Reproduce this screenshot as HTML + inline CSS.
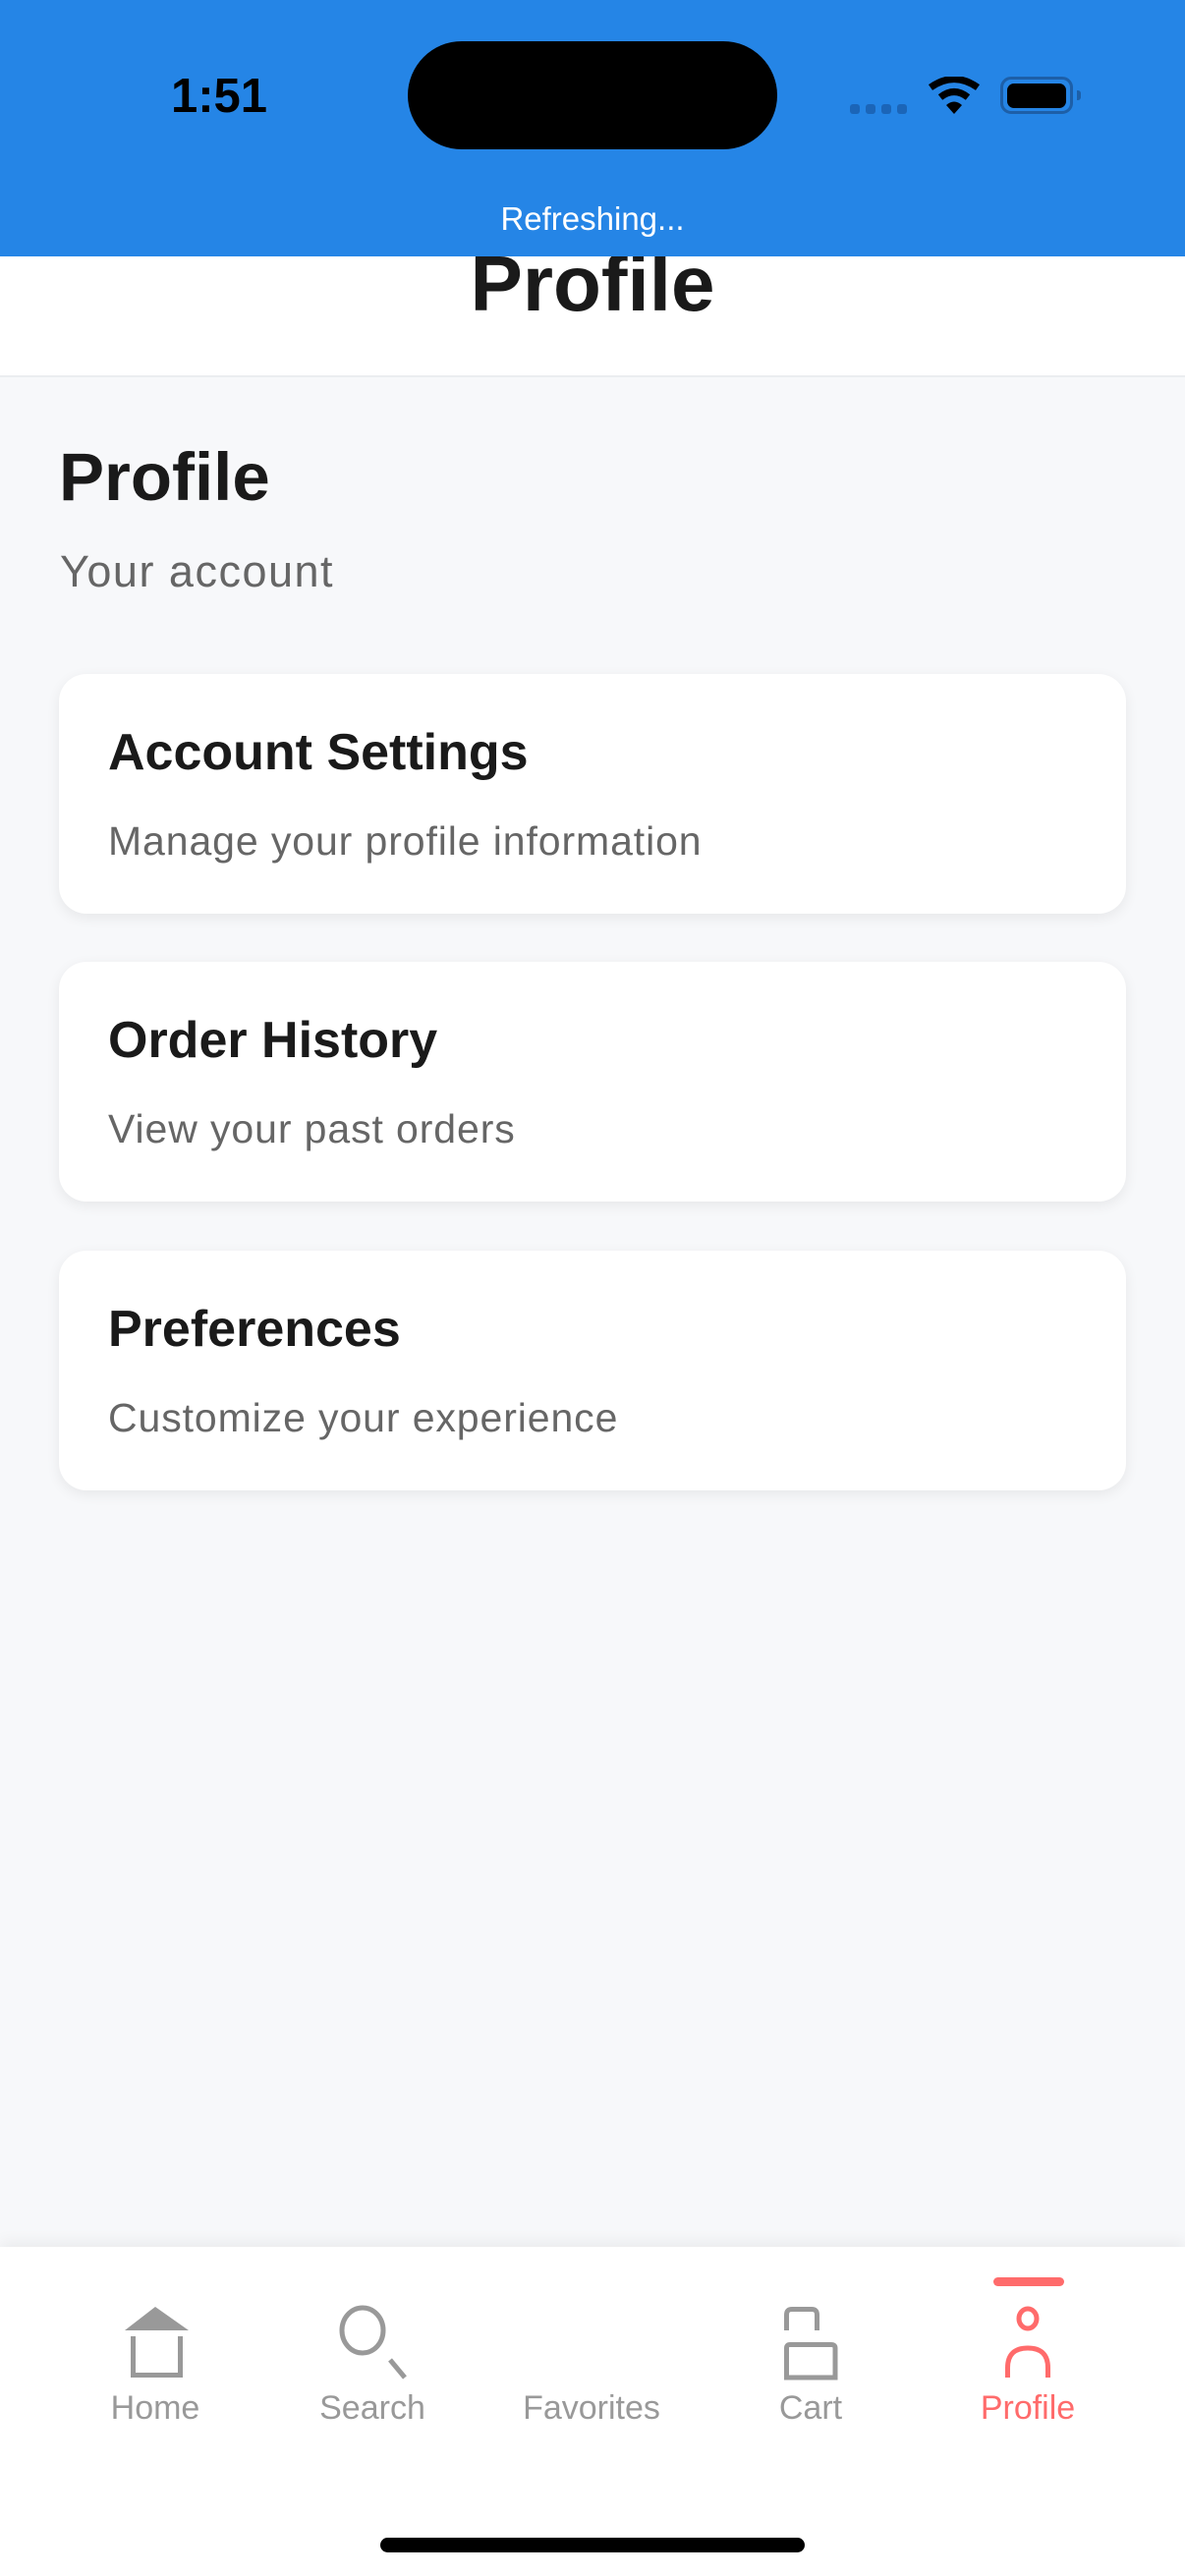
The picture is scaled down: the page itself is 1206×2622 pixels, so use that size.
<!DOCTYPE html>
<html><head><meta charset="utf-8"><style>
*{margin:0;padding:0;box-sizing:border-box}
body{width:1206px;height:2622px;background:#f7f8fa;font-family:"Liberation Sans",sans-serif;position:relative;overflow:hidden}
.abs{position:absolute}
.hdr{left:0;top:0;width:1206px;height:384px;background:#fff;border-bottom:2px solid #ebedf0}
.blue{left:0;top:0;width:1206px;height:261px;background:#2585e6}
.card{left:60px;width:1086px;height:244px;background:#fff;border-radius:28px;box-shadow:0 4px 14px rgba(0,0,0,0.07)}
.card .t{position:absolute;left:50px;top:50px;font-size:52px;font-weight:bold;color:#1a1a1a;line-height:60px}
.card .d{position:absolute;left:50px;top:146px;font-size:41px;color:#666;letter-spacing:0.9px;line-height:48px}
.lbl{position:absolute;top:2431px;width:222px;text-align:center;font-size:34px;color:#999;line-height:40px}
</style></head><body>
<div class="abs hdr"></div>
<div class="abs" style="left:0;top:244px;width:1206px;text-align:center;font-size:80px;font-weight:bold;color:#1a1a1a;line-height:90px">Profile</div>
<div class="abs blue"></div>
<div class="abs" style="left:148px;top:70px;width:150px;text-align:center;font-size:49px;font-weight:bold;color:#000;line-height:56px">1:51</div>
<div class="abs" style="left:415px;top:42px;width:376px;height:110px;border-radius:55px;background:#000"></div>
<div class="abs" style="left:865px;top:106px;width:10px;height:10px;border-radius:3px;background:#1b65b8"></div>
<div class="abs" style="left:881px;top:106px;width:10px;height:10px;border-radius:3px;background:#1b65b8"></div>
<div class="abs" style="left:897px;top:106px;width:10px;height:10px;border-radius:3px;background:#1b65b8"></div>
<div class="abs" style="left:913px;top:106px;width:10px;height:10px;border-radius:3px;background:#1b65b8"></div>
<svg class="abs" style="left:944px;top:78px" width="54" height="40" viewBox="0 0 54 40"><path d="M3 11 Q27 -6 51 11" stroke="#000" stroke-width="7" fill="none"/><path d="M13 21 Q27 10 41 21" stroke="#000" stroke-width="7" fill="none"/><path d="M19 29 Q27 22 35 29 L27 38 Z" fill="#000"/></svg>
<div class="abs" style="left:1018px;top:78px;width:74px;height:38px;border:3px solid #1d5fa8;border-radius:11px"></div>
<div class="abs" style="left:1025px;top:85px;width:60px;height:25px;background:#000;border-radius:7px"></div>
<div class="abs" style="left:1096px;top:92px;width:4px;height:10px;background:#1d5fa8;border-radius:0 3px 3px 0"></div>
<div class="abs" style="left:0;top:203px;width:1206px;text-align:center;font-size:33px;color:#fff;line-height:40px">Refreshing...</div>

<div class="abs" style="left:60px;top:446px;font-size:69px;font-weight:bold;color:#1a1a1a;line-height:80px">Profile</div>
<div class="abs" style="left:61px;top:556px;font-size:45px;color:#666;letter-spacing:1.5px;line-height:52px">Your account</div>

<div class="abs card" style="top:686px"><div class="t">Account Settings</div><div class="d">Manage your profile information</div></div>
<div class="abs card" style="top:979px"><div class="t">Order History</div><div class="d">View your past orders</div></div>
<div class="abs card" style="top:1273px"><div class="t">Preferences</div><div class="d">Customize your experience</div></div>

<div class="abs" style="left:0;top:2287px;width:1206px;height:335px;background:#fff;box-shadow:0 -6px 14px rgba(0,0,0,0.05)"></div>
<div class="abs" style="left:1011px;top:2318px;width:72px;height:9px;border-radius:5px;background:#ff6b6b"></div>
<svg class="abs" style="left:0;top:2330px" width="1206" height="100">
<polygon points="158,18 127,42 192,42" fill="#999"/>
<path d="M135.5 48 V87.5 H183.5 V48" stroke="#999" stroke-width="5" fill="none"/>
<ellipse cx="369" cy="42" rx="21" ry="23" stroke="#999" stroke-width="5" fill="none"/>
<line x1="397" y1="72" x2="412" y2="90" stroke="#999" stroke-width="5"/>
<path d="M800.5 42 V26 Q800.5 20.5 806 20.5 H826 Q831.5 20.5 831.5 26 V42" stroke="#999" stroke-width="5" fill="none"/>
<path d="M800.5 90 V60 Q800.5 56.5 804 56.5 H846 Q850 56.5 850 60 V90 Z" stroke="#999" stroke-width="5" fill="none"/>
<ellipse cx="1046" cy="30" rx="9" ry="10" stroke="#ff6b6b" stroke-width="5" fill="none"/>
<path d="M1025.5 90 V80 Q1025.5 60 1046 60 Q1066.5 60 1066.5 80 V90" stroke="#ff6b6b" stroke-width="5" fill="none"/>
</svg>
<div class="lbl" style="left:47px">Home</div>
<div class="lbl" style="left:268px">Search</div>
<div class="lbl" style="left:491px">Favorites</div>
<div class="lbl" style="left:714px">Cart</div>
<div class="lbl" style="left:935px;color:#ff6b6b">Profile</div>
<div class="abs" style="left:387px;top:2583px;width:432px;height:15px;border-radius:8px;background:#000"></div>
</body></html>
